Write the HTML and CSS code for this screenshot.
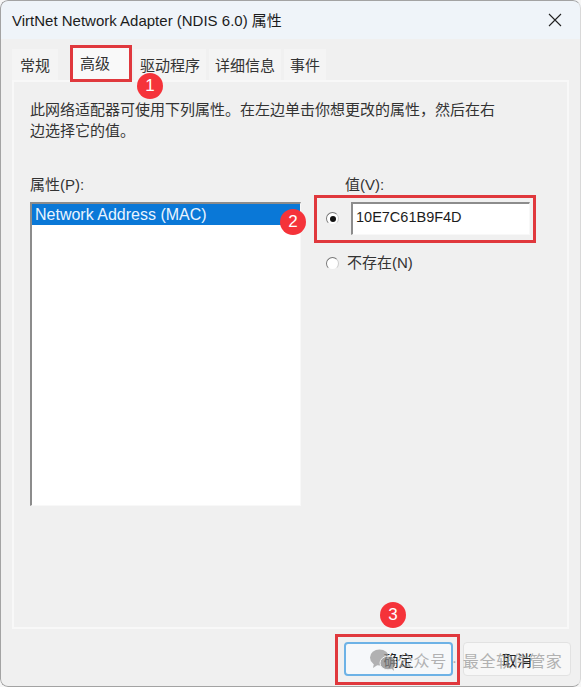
FILE: index.html
```html
<!DOCTYPE html>
<html lang="zh">
<head>
<meta charset="utf-8">
<title>VirtNet Network Adapter (NDIS 6.0) 属性</title>
<link rel="stylesheet" href="styles.css">
</head>
<body>
<div class="window">
  <header class="titlebar">
    <span class="title">VirtNet Network Adapter (NDIS 6.0) 属性</span>
    <svg class="close" width="14" height="14" viewBox="0 0 14 14"><path d="M1 1L13 13M13 1L1 13" stroke="#222" stroke-width="1.1" fill="none"/></svg>
  </header>
  <nav class="tabs">
    <span class="tab tab-first">常规</span>
    <span class="tab tab-active">高级</span>
    <span class="tab">驱动程序</span>
    <span class="tab">详细信息</span>
    <span class="tab">事件</span>
  </nav>
  <main class="panel">
    <p class="intro">此网络适配器可使用下列属性。在左边单击你想更改的属性，然后在右<br>边选择它的值。</p>
    <div class="columns">
      <section class="col-left">
        <div class="label">属性(P):</div>
        <div class="listbox"><div class="list-item">Network Address (MAC)</div></div>
      </section>
      <section class="col-right">
        <div class="label label-value">值(V):</div>
        <div class="value-row">
          <span class="radio radio-on"></span>
          <div class="textbox">10E7C61B9F4D</div>
        </div>
        <div class="none-row">
          <span class="radio"></span>
          <span class="none-label">不存在(N)</span>
        </div>
      </section>
    </div>
  </main>
  <footer class="actions">
    <button class="btn btn-default">确定</button>
    <button class="btn">取消</button>
  </footer>

  <div class="mark mark-tab"></div>
  <div class="mark mark-value"></div>
  <div class="mark mark-ok"></div>
  <div class="badge badge-1">1</div>
  <div class="badge badge-2">2</div>
  <div class="badge badge-3">3</div>
  <div class="watermark">
    <svg width="28" height="24" viewBox="0 0 28 24"><ellipse cx="10.500" cy="9.500" rx="9.500" ry="8" fill="#9a9a9a"/><path d="M5 15L4 20L10 16Z" fill="#9a9a9a"/><ellipse cx="19" cy="15" rx="8" ry="6.800" fill="#8a8a8a" stroke="#f0f0f0"/><path d="M22 20L25 23L24 18Z" fill="#8a8a8a"/></svg>
    <span class="wm-text">公众号 · 最全软件管家</span>
  </div>
  <div class="frame"></div>
</div>
</body>
</html>
```
FILE: styles.css
```css
* { box-sizing: border-box; }
html, body { margin: 0; padding: 0; }
body {
  width: 581px;
  height: 687px;
  overflow: hidden;
  background: #f6f6f6;
  font-family: "Liberation Sans", "Noto Sans CJK SC", sans-serif;
  color: #1c1c1c;
}
.window {
  position: relative;
  width: 581px;
  height: 687px;
  background: #f0f0f0;
  border-radius: 8px;
  overflow: hidden;
  display: flex;
  flex-direction: column;
}
.frame {
  position: absolute;
  inset: 0;
  border: 1px solid #a3a3a3;
  border-right-color: #d8d8d8;
  border-radius: 8px;
  pointer-events: none;
}
.titlebar {
  height: 39px;
  flex: none;
  background: #eff4f9;
  display: flex;
  align-items: center;
  justify-content: space-between;
  padding: 0 19px 0 12px;
}
.title { font-size: 15px; }
.tabs {
  height: 41px;
  flex: none;
  display: flex;
  align-items: flex-end;
  padding-left: 12px;
}
.tab {
  height: 31px;
  padding: 0 6px;
  font-size: 15px;
  line-height: 34px;
  background: #f4f4f4;
  margin-right: 3px;
  color: #333;
}
.tab-first { padding: 0 8px; margin-right: 14px; }
.tab-active {
  height: 35px;
  width: 58px;
  padding: 0 8px;
  line-height: 38px;
  background: #f9f9f9;
  margin-right: 4px;
}
.panel {
  flex: none;
  height: 549px;
  margin: 0 12px;
  border: 2px solid #f8f8f8;
  padding: 17px 16px 0;
}
.intro {
  margin: 0;
  font-size: 15px;
  line-height: 21px;
  color: #333;
}
.columns {
  display: flex;
  margin-top: 34px;
}
.label { font-size: 15px; line-height: 20px; color: #333; }
.col-left { width: 271px; }
.listbox {
  margin-top: 7px;
  height: 304px;
  background: #fff;
  border: 1px solid #f8f8f8;
  border-top: 2px solid #8c8c8c;
  border-left: 2px solid #8c8c8c;
}
.list-item {
  height: 21px;
  background: #0a78d7;
  color: #e9f4ff;
  font-size: 16px;
  line-height: 21px;
  padding-left: 3px;
}
.col-right {
  margin-left: 25px;
  width: 206px;
}
.label-value { padding-left: 19px; }
.value-row {
  display: flex;
  align-items: center;
  margin-top: 7px;
}
.radio {
  flex: none;
  width: 13px;
  height: 13px;
  border-radius: 50%;
  background: #fff;
  border: 1px solid;
  border-color: #777 #ccc #eee #777;
  display: flex;
  align-items: center;
  justify-content: center;
}
.radio-on::after {
  content: "";
  width: 6px;
  height: 6px;
  border-radius: 50%;
  background: #111;
}
.textbox {
  margin-left: 12px;
  width: 179px;
  height: 33px;
  background: #fff;
  border: 1px solid #f8f8f8;
  border-top: 2px solid #8c8c8c;
  border-left: 2px solid #8c8c8c;
  font-size: 14.500px;
  line-height: 26px;
  padding-left: 3px;
}
.none-row {
  display: flex;
  align-items: center;
  margin-top: 18px;
}
.none-label { margin-left: 8px; font-size: 15px; line-height: 20px; color: #333; }
.actions {
  flex: 1;
  display: flex;
  justify-content: flex-end;
  align-items: flex-start;
  gap: 10px;
  padding: 13px 10px 0 0;
}
.btn {
  width: 108px;
  height: 34px;
  background: #f7f7f7;
  border: 1px solid #e2e2e2;
  border-radius: 4px;
  font-family: inherit;
  font-size: 15px;
  color: #222;
  padding: 0;
}
.btn-default { width: 109px; border: 2px solid #6db2e6; background: #f6f8fa; }
.mark {
  position: absolute;
  border: 3px solid #e0383d;
}
.mark-tab { left: 70px; top: 45px; width: 62px; height: 37px; }
.mark-value { left: 314px; top: 195px; width: 222px; height: 48px; }
.mark-ok { left: 335px; top: 634px; width: 125px; height: 51px; }
.badge {
  position: absolute;
  width: 26px;
  height: 26px;
  border-radius: 50%;
  background: #f5333a;
  color: #fff;
  font-size: 17px;
  line-height: 26px;
  text-align: center;
}
.badge-1 { left: 137px; top: 73px; }
.badge-2 { left: 280px; top: 209px; }
.badge-3 { left: 380px; top: 602px; }
.watermark {
  position: absolute;
  left: 369px;
  top: 648px;
  display: flex;
  align-items: center;
  gap: 0;
  opacity: .75;
}
.wm-text {
  font-size: 16px;
  letter-spacing: 0.600px;
  color: #9a9a9a;
  white-space: nowrap;
}
```
